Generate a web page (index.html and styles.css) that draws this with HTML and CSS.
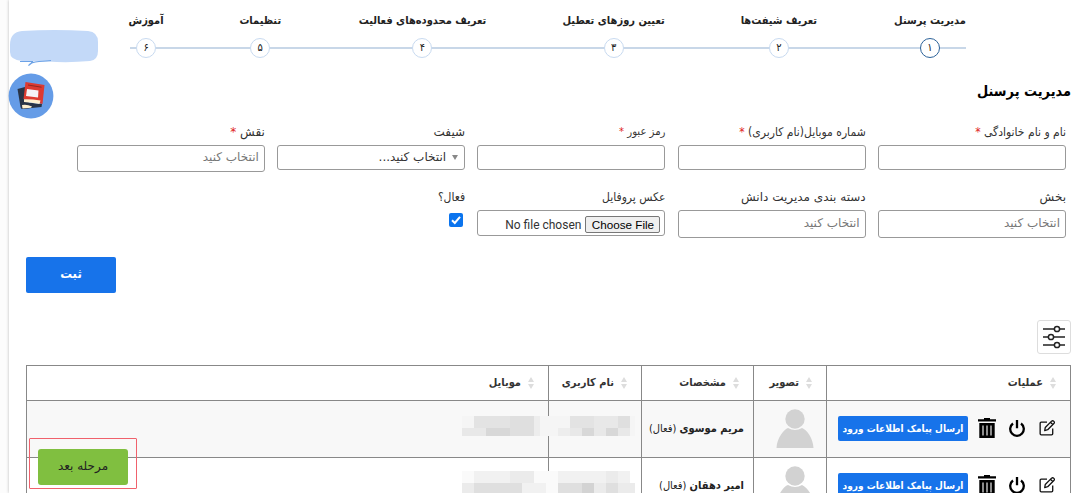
FILE: index.html
```html
<!DOCTYPE html>
<html lang="fa" dir="rtl">
<head>
<meta charset="utf-8">
<title>مدیریت پرسنل</title>
<link rel="stylesheet" href="styles.css">
</head>
<body>
<svg class="symbols" aria-hidden="true">
  <symbol id="sort" viewBox="0 0 6 12"><path d="M3 0 6 5H0ZM0 7H6L3 12Z"/></symbol>
  <symbol id="edit" viewBox="0 0 14 14"><path d="M7 1.8H2Q1 1.8 1 3V12Q1 13 2 13H11Q12 13 12 12V7.5M5 9.2 5.5 6.5 11 1Q12 .2 13 1.2T13 3L7.6 8.5Z M10 2 12 4" fill="none" stroke="#111" stroke-width="1.15" stroke-linejoin="round"/></symbol>
  <symbol id="power" viewBox="0 0 16 18"><path d="M4 4.5A6.8 6.8 0 1 0 12 4.5M8 1V9.2" fill="none" stroke="#000" stroke-width="2.3"/></symbol>
  <symbol id="trash" viewBox="0 0 18 20"><path d="M0 1.3H6V0H12V1.3H18V3.4H0ZM1.3 5H16.7V20H1.3Z"/><path d="M5 7.5V17.5M9 7.5V17.5M13 7.5V17.5" stroke="#fff" stroke-width="1.1"/></symbol>
  <symbol id="user" viewBox="0 0 38 39"><circle cx="19" cy="10" r="9.7" fill="#d2d2d2"/><path d="M.5 39C1 29 8 20 12 19Q19 23 26 19C31 21 37 29 37.5 39Z" fill="#d2d2d2"/></symbol>
</svg>
<main class="panel">
  <ol class="steps">
    <li class="step s1 active"><b><span>مدیریت پرسنل</span></b><i>۱</i></li>
    <li class="step s2"><b><span>تعریف شیفت‌ها</span></b><i>۲</i></li>
    <li class="step s3"><b><span>تعیین روزهای تعطیل</span></b><i>۳</i></li>
    <li class="step s4"><b><span>تعریف محدوده‌های فعالیت</span></b><i>۴</i></li>
    <li class="step s5"><b><span>تنظیمات</span></b><i>۵</i></li>
    <li class="step s6"><b><span>آموزش</span></b><i>۶</i></li>
  </ol>
  <h1>مدیریت پرسنل</h1>
  <form class="form">
    <div class="field"><label>نام و نام خانوادگی <em>*</em></label><div class="box"></div></div>
    <div class="field"><label>شماره موبایل(نام کاربری) <em>*</em></label><div class="box"></div></div>
    <div class="field"><label class="compact">رمز عبور <em>*</em></label><div class="box"></div></div>
    <div class="field"><label class="wide">شیفت</label><div class="box select"><svg class="caret" viewBox="0 0 6 5"><path d="M0 0H6L3 5Z"/></svg>انتخاب کنید...</div></div>
    <div class="field"><label class="wide">نقش <em>*</em></label><div class="box tall">انتخاب کنید</div></div>
    <div class="field"><label class="wide">بخش</label><div class="box tall lower">انتخاب کنید</div></div>
    <div class="field"><label class="wide">دسته بندی مدیریت دانش</label><div class="box tall lower">انتخاب کنید</div></div>
    <div class="field"><label>عکس پروفایل</label><div class="box file"><span class="choose">Choose File</span><span>No file chosen</span></div></div>
    <div class="field"><label>فعال؟</label><svg class="check" viewBox="0 0 14 14"><rect width="14" height="14" rx="2" fill="#0b74ee"/><path d="M3 7.2 5.8 10 11 3.8" fill="none" stroke="#fff" stroke-width="2"/></svg></div>
  </form>
  <button class="submit">ثبت</button>
  <div class="filter"><svg viewBox="0 0 24 24"><path d="M1 4H23M1 12H23M1 20H23" stroke="#222" stroke-width="1.5"/><g fill="#fff" stroke="#222" stroke-width="1.5"><circle cx="15" cy="4" r="2.6"/><circle cx="9" cy="12" r="2.6"/><circle cx="15" cy="20" r="2.6"/></g></svg></div>
  <table class="staff">
    <colgroup><col class="c1"><col class="c2"><col class="c3"><col class="c4"><col></colgroup>
    <thead><tr>
      <th><svg class="sort"><use href="#sort"/></svg>عملیات</th>
      <th><svg class="sort"><use href="#sort"/></svg>تصویر</th>
      <th><svg class="sort"><use href="#sort"/></svg>مشخصات</th>
      <th><svg class="sort"><use href="#sort"/></svg>نام کاربری</th>
      <th><svg class="sort"><use href="#sort"/></svg>موبایل</th>
    </tr></thead>
    <tbody>
      <tr class="shaded">
        <td><div class="actions"><svg class="edit"><use href="#edit"/></svg><svg class="power"><use href="#power"/></svg><svg class="trash"><use href="#trash"/></svg><span class="sms">ارسال پیامک اطلاعات ورود</span></div></td>
        <td><svg class="user"><use href="#user"/></svg></td>
        <td class="name"><b>مریم موسوی</b> (فعال)</td><td></td><td></td>
      </tr>
      <tr>
        <td><div class="actions"><svg class="edit"><use href="#edit"/></svg><svg class="power"><use href="#power"/></svg><svg class="trash"><use href="#trash"/></svg><span class="sms">ارسال پیامک اطلاعات ورود</span></div></td>
        <td><svg class="user"><use href="#user"/></svg></td>
        <td class="name"><b>امیر دهقان</b> (فعال)</td><td></td><td></td>
      </tr>
    </tbody>
  </table>
</main>

<svg class="mask" viewBox="0 0 174 77" shape-rendering="crispEdges">
  <g>
    <path fill="#f5f5f5" d="M0 0H12V12H0ZM72 0H108V20H72ZM168 0H173V20H168Z"/>
    <path fill="#e3e3e3" d="M12 0H48V12H12ZM108 0H132V12H108Z"/>
    <path fill="#dfdfdf" d="M48 0H72V20H48ZM156 0H168V12H156Z"/>
    <path fill="#ededed" d="M72 0H78V20H72ZM96 12H108V20H96Z"/>
    <path fill="#e8e8e8" d="M0 12H24V20H0ZM132 0H156V12H132ZM108 12H120V20H108ZM132 12H144V20H132ZM156 12H168V20H156Z"/>
    <path fill="#d8d8d8" d="M24 12H48V20H24ZM120 12H132V20H120ZM144 12H156V20H144Z"/>
  </g>
  <g>
    <path fill="#fafafa" d="M72 55H96V77H72ZM0 55H12V67H0Z"/>
    <path fill="#f1f1f1" d="M12 55H48V67H12ZM96 55H144V67H96ZM156 55H168V67H156ZM60 67H84V77H60Z"/>
    <path fill="#ebebeb" d="M48 55H72V67H48ZM144 55H156V67H144ZM0 67H12V77H0ZM132 67H144V77H132ZM156 67H173V77H156Z"/>
    <path fill="#dfdfdf" d="M12 67H60V77H12ZM96 67H120V77H96ZM144 67H156V77H144Z"/>
    <path fill="#d3d3d3" d="M120 67H132V77H120Z"/>
  </g>
</svg>

<svg class="bubble" viewBox="0 0 92 40">
  <path d="M2 15Q2 2 14 1Q46-1 80 1Q90 2 90 12V21Q90 30 82 31Q60 33 40 31.5L14 31Q2 30 2 22Z" fill="#c3d9f8"/>
  <path d="M12 31.5H24.5Q24 33 20.5 35.5Q23 32 31 31.5T43 30.5" fill="none" stroke="#6ca2e6" stroke-width="1.2"/>
</svg>
<svg class="help" viewBox="0 0 46 46">
  <circle cx="23" cy="23" r="22.4" fill="#659ce7"/>
  <path d="M9.5 16 17 14 22 35 14 36Q13 36 12.5 34Z" fill="#293447"/>
  <path d="M14 29 34 31 33.5 34 14 36Z" fill="#293447"/>
  <path d="M17.5 9 36.5 12 34.5 31 15.5 26Z" fill="#dc3a31"/>
  <path d="M20 12 33.5 14.2" stroke="#8e2822" stroke-width="1"/>
  <path d="M19 16 30.5 17.5 30 24.5 18 23Z" fill="#f5f2f7"/>
  <path d="M16 26.2Q24 26 32.5 27.5L31.5 31Q23 29.5 16 29Z" fill="#fff0cf"/>
  <path d="M14 32Q19 31 24 33.5L23 34.8 14.5 35.5Z" fill="#fff0cf"/>
</svg>
<div class="next-wrap"><button class="next">مرحله بعد</button></div>
</body>
</html>
```

FILE: styles.css
```css
* { box-sizing: border-box; }
body { position: relative; margin: 0; height: 493px; overflow: hidden; background: #fcfcfc; font: 11px "DejaVu Sans Condensed", "DejaVu Sans", sans-serif; color: #333; }
.symbols { position: absolute; width: 0; height: 0; }
.panel { margin-left: 9px; height: 493px; padding: 0 12px 0 17px; background: #fff; box-shadow: 0 0 3px #bbb; overflow: hidden; }

.steps { display: flex; justify-content: space-between; width: 836px; height: 81px; margin: 0 105px 0 0; padding: 13px 0 0; list-style: none; background: linear-gradient(#c8d7e8, #c8d7e8) 0 47px / 100% 2px no-repeat; }
.step { display: flex; flex-direction: column; align-items: center; white-space: nowrap; color: #222; }
.step b { display: flex; justify-content: center; height: 25px; line-height: 16px; width: 100%; }
.step i { width: 20px; height: 20px; border: 1px solid #c8daf0; border-radius: 50%; background: #fff; font-style: normal; text-align: center; line-height: 18px; }
.active i { border-color: #2c6299; }
.s1 { width: 72px; }
.s2 { width: 76px; }
.s3 { width: 100px; }
.s4 { width: 128px; }
.s5 { width: 42px; }
.s6 { width: 32px; }

h1 { margin: 0; height: 43px; line-height: 20px; font-size: 14.4px; color: #000; }

.form { display: grid; grid-template-columns: repeat(5, 188px); column-gap: 12.3px; margin: 0 5px 0 0; height: 133px; grid-template-rows: 65px 68px; }
label { display: block; height: 21px; line-height: 16px; white-space: nowrap; font-size: 12px; }
label.compact { font-size: 11.2px; }
label.wide { font-family: "DejaVu Sans", sans-serif; }
label em { color: #e02020; font-style: normal; }
.box { height: 25px; border: 1px solid #999; border-radius: 3px; padding: 0 5px; line-height: 23px; font-family: "DejaVu Sans", sans-serif; font-size: 12px; }
.tall { height: 27px; color: #777; }
.lower { height: 28px; line-height: 25px; }
.select { display: flex; align-items: center; gap: 6px; }
.caret { width: 6px; height: 5px; margin-right: 1px; fill: #888; }
.file { display: flex; align-items: center; gap: 4px; height: 26px; padding: 3px 4px 0; font: 12px Roboto, sans-serif; }
.choose { height: 17px; width: 75px; border: 1px solid #777; border-radius: 2px; background: #efefef; color: #000; text-align: center; font: 11.7px/16px "Liberation Sans", sans-serif; }
.check { display: block; width: 14px; height: 14px; margin: 3px 2px 0 0; }

.submit { display: block; width: 90px; height: 36px; margin: 0 auto 27px 0; padding: 0 0 3px; border: 0; border-radius: 2px; background: #1773ea; color: #fff; font: bold 13px "DejaVu Sans Condensed", sans-serif; }
.filter { width: 34px; height: 34px; border: 1px solid #ddd; border-radius: 3px; padding: 4px; margin-bottom: 11px; }

.staff { width: 1045px; table-layout: fixed; border-collapse: collapse; }
.c1 { width: 244px; }
.c2 { width: 73px; }
.c3 { width: 112px; }
.c4 { width: 93px; }
th, td { border: 1px solid #888; padding: 0; text-align: right; white-space: nowrap; }
th { height: 35px; padding: 0 14px 2px 0; }
td { height: 57px; padding-bottom: 2px; }
.sort { width: 6px; height: 12px; fill: #ddd; margin-left: 7px; vertical-align: middle; }
.shaded { background: #f8f8f8; }
.actions { display: flex; align-items: center; padding-right: 15px; }
.edit { width: 16px; height: 16px; }
.power { width: 16px; height: 18px; margin-right: 14px; }
.trash { width: 18px; height: 20px; margin-right: 13px; }
.sms { width: 130px; height: 25px; margin-right: 10px; border-radius: 2px; background: #1773ea; color: #fff; font-weight: bold; font-size: 10px; text-align: center; line-height: 25px; }
.user { display: block; width: 38px; height: 39px; margin: 1px 12px 0 0; }
.name { padding-right: 9px; color: #222; }

.mask { position: absolute; left: 462px; top: 416px; width: 174px; height: 77px; }
.bubble { position: absolute; left: 8px; top: 30px; width: 92px; height: 40px; }
.help { position: absolute; left: 7.5px; top: 72.5px; width: 46px; height: 46px; }
.next-wrap { position: absolute; left: 29px; top: 438px; width: 108px; height: 51px; padding: 10px 8px 0 0; border: 1px solid #f0616c; border-radius: 1px; }
.next { display: block; width: 90px; height: 36px; padding: 0 0 2px; border: 0; border-radius: 3px; background: #80bf40; color: #222; font: 12px "DejaVu Sans", sans-serif; }
```
